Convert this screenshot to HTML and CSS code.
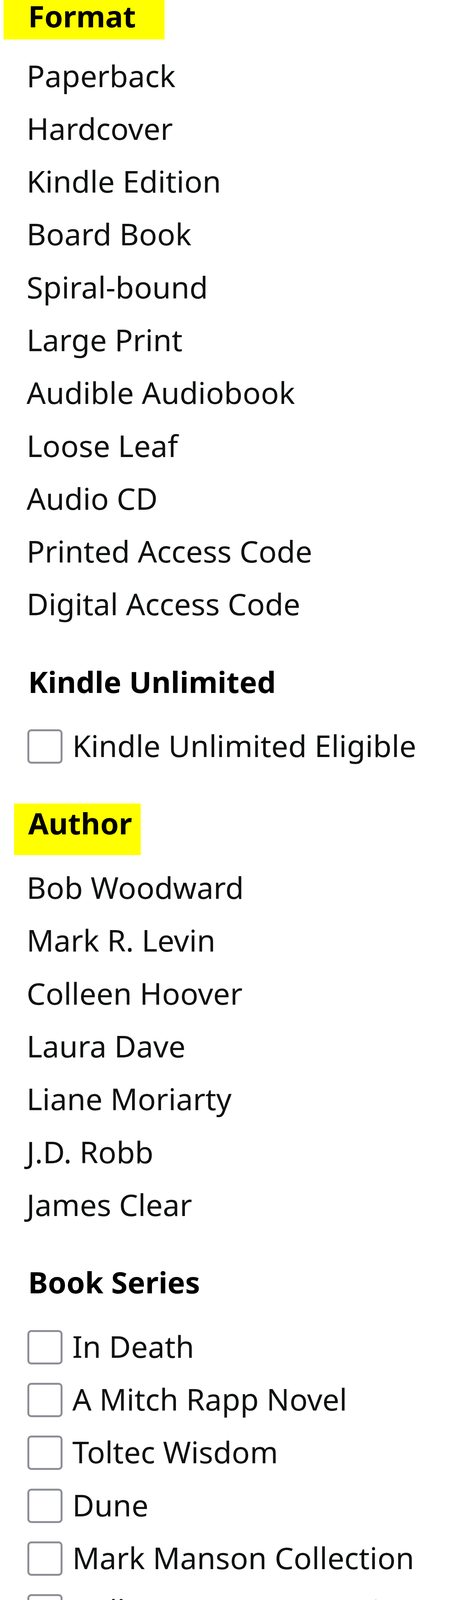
FILE: index.html
```html
<!DOCTYPE html>
<html lang="en">
<head>
<meta charset="utf-8">
<title>Filters</title>
<link rel="stylesheet" href="styles.css">
</head>
<body>
<aside class="filters">
  <section class="group">
    <h2 class="title hl hl-format">Format</h2>
    <ul class="list">
      <li class="item"><a class="link" href="#">Paperback</a></li>
      <li class="item"><a class="link" href="#">Hardcover</a></li>
      <li class="item"><a class="link" href="#">Kindle Edition</a></li>
      <li class="item"><a class="link" href="#">Board Book</a></li>
      <li class="item"><a class="link" href="#">Spiral-bound</a></li>
      <li class="item"><a class="link" href="#">Large Print</a></li>
      <li class="item"><a class="link" href="#">Audible Audiobook</a></li>
      <li class="item"><a class="link" href="#">Loose Leaf</a></li>
      <li class="item"><a class="link" href="#">Audio CD</a></li>
      <li class="item"><a class="link" href="#">Printed Access Code</a></li>
      <li class="item"><a class="link" href="#">Digital Access Code</a></li>
    </ul>
  </section>

  <section class="group">
    <h2 class="title">Kindle Unlimited</h2>
    <ul class="list">
      <li class="item check"><span class="box"></span><span class="label">Kindle Unlimited Eligible</span></li>
    </ul>
  </section>

  <section class="group">
    <h2 class="title hl hl-author">Author</h2>
    <ul class="list">
      <li class="item"><a class="link" href="#">Bob Woodward</a></li>
      <li class="item"><a class="link" href="#">Mark R. Levin</a></li>
      <li class="item"><a class="link" href="#">Colleen Hoover</a></li>
      <li class="item"><a class="link" href="#">Laura Dave</a></li>
      <li class="item"><a class="link" href="#">Liane Moriarty</a></li>
      <li class="item"><a class="link" href="#">J.D. Robb</a></li>
      <li class="item"><a class="link" href="#">James Clear</a></li>
    </ul>
  </section>

  <section class="group">
    <h2 class="title">Book Series</h2>
    <ul class="list">
      <li class="item check"><span class="box"></span><span class="label">In Death</span></li>
      <li class="item check"><span class="box"></span><span class="label">A Mitch Rapp Novel</span></li>
      <li class="item check"><span class="box"></span><span class="label">Toltec Wisdom</span></li>
      <li class="item check"><span class="box"></span><span class="label">Dune</span></li>
      <li class="item check"><span class="box"></span><span class="label">Mark Manson Collection</span></li>
      <li class="item check"><span class="box"></span><span class="label">College Test Preparation</span></li>
      <li class="item check"><span class="box"></span><span class="label">The Wheel of Time</span></li>
    </ul>
  </section>

  <section class="group">
    <h2 class="title hl hl-language">Language</h2>
    <ul class="list">
      <li class="item check"><span class="box"></span><span class="label">English</span></li>
    </ul>
  </section>
</aside>
</body>
</html>
```

FILE: styles.css
```css
* { box-sizing: border-box; }

html, body {
  margin: 0;
  padding: 0;
  background: #ffffff;
}

body {
  width: 1200px;
  height: 4653px;
  overflow: hidden;
  font-family: "Noto Sans", "Open Sans", "DejaVu Sans", sans-serif;
  font-size: 77px;
  color: #0f1111;
}

.filters {
  padding-left: 68px;
}

.group {
  margin: 0;
}

.title {
  margin: 81px 0 46.5px;
  padding-left: 4px;
  font-size: 76px;
  font-weight: 700;
  line-height: 100px;
  color: #000000;
}

.hl {
  background: #ffff00;
  line-height: 76px;
}

.hl-format {
  margin: 0 0 24.5px -59px;
  width: 412px;
  padding: 2.5px 0 22.5px 63px;
}

.hl-author {
  margin: 80px 0 15.5px -32px;
  width: 324px;
  padding: 12.5px 0 43.5px 36px;
}

.hl-language {
  margin: 36.2px 0 33.5px -40px;
  width: 479px;
  padding: 57.5px 0 25.5px 44px;
}

.list {
  list-style: none;
  margin: 0;
  padding: 0;
}

.item {
  line-height: 135.3px;
  height: 135.3px;
  white-space: nowrap;
}

.link {
  color: #0f1111;
  text-decoration: none;
}

.check {
  display: flex;
  align-items: flex-start;
}

.box {
  flex: none;
  width: 90px;
  height: 88px;
  margin: 26px 25px 0 2px;
  border: 5px solid #8d9096;
  border-radius: 10px;
  background: #ffffff;
}

.label {
  color: #0f1111;
}
```
